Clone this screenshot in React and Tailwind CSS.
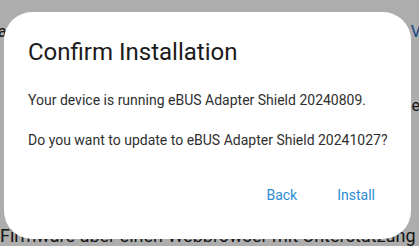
import React from 'react';

const ConfirmDialog = ({ current, next, onBack, onInstall }) => {
  return (
    <div className="absolute left-[4px] top-[12px] w-[407px] h-[227px] rounded-[28px] bg-white flex flex-col">
      {/* Title */}
      <h2 className="pt-6 px-6 text-[24px] leading-[32px] text-[#1b1b1b]">Confirm Installation</h2>

      {/* Body */}
      <div className="mt-[22px] px-6 flex flex-col gap-5 text-[14px] leading-[20px] text-[#2f2f2f] whitespace-nowrap">
        <p>Your device is running {current}.</p>
        <p>Do you want to update to {next}?</p>
      </div>

      {/* Actions */}
      <div className="mt-auto pb-[26px] pr-6 flex justify-end gap-4">
        <button
          onClick={onBack}
          className="h-9 px-3 text-[14px] font-normal text-[#2d8dd5]"
        >
          Back
        </button>
        <button
          onClick={onInstall}
          className="h-9 px-3 text-[14px] font-normal text-[#2d8dd5]"
        >
          Install
        </button>
      </div>
    </div>
  );
};

const App = () => {
  return (
    <div className="relative w-[419px] h-[246px] overflow-hidden bg-white font-['Roboto','Liberation_Sans',sans-serif]">
      {/* Page content behind the dialog */}
      <div className="flex flex-col">
        <div className="mt-[20px] flex justify-between text-[16px] leading-[24px] text-[#222]">
          <span className="-ml-[2px]">ar</span>
          <span className="text-[#1565c0] -mr-[2px]">V</span>
        </div>
        <div className="mt-[50px] flex justify-end text-[16px] leading-[24px] text-[#222]">
          <span className="-mr-[1px]">he</span>
        </div>
        <div className="mt-[104px] whitespace-nowrap text-[18px] leading-[27px] text-[#222]">
          Firmware über einen Webbrowser mit Unterstützung <span className="text-[#1565c0]">v</span>
        </div>
      </div>

      {/* Scrim */}
      <div className="absolute inset-0 bg-black/[0.32]" />

      <ConfirmDialog
        current="eBUS Adapter Shield 20240809"
        next="eBUS Adapter Shield 20241027"
      />
    </div>
  );
};

export default App;
